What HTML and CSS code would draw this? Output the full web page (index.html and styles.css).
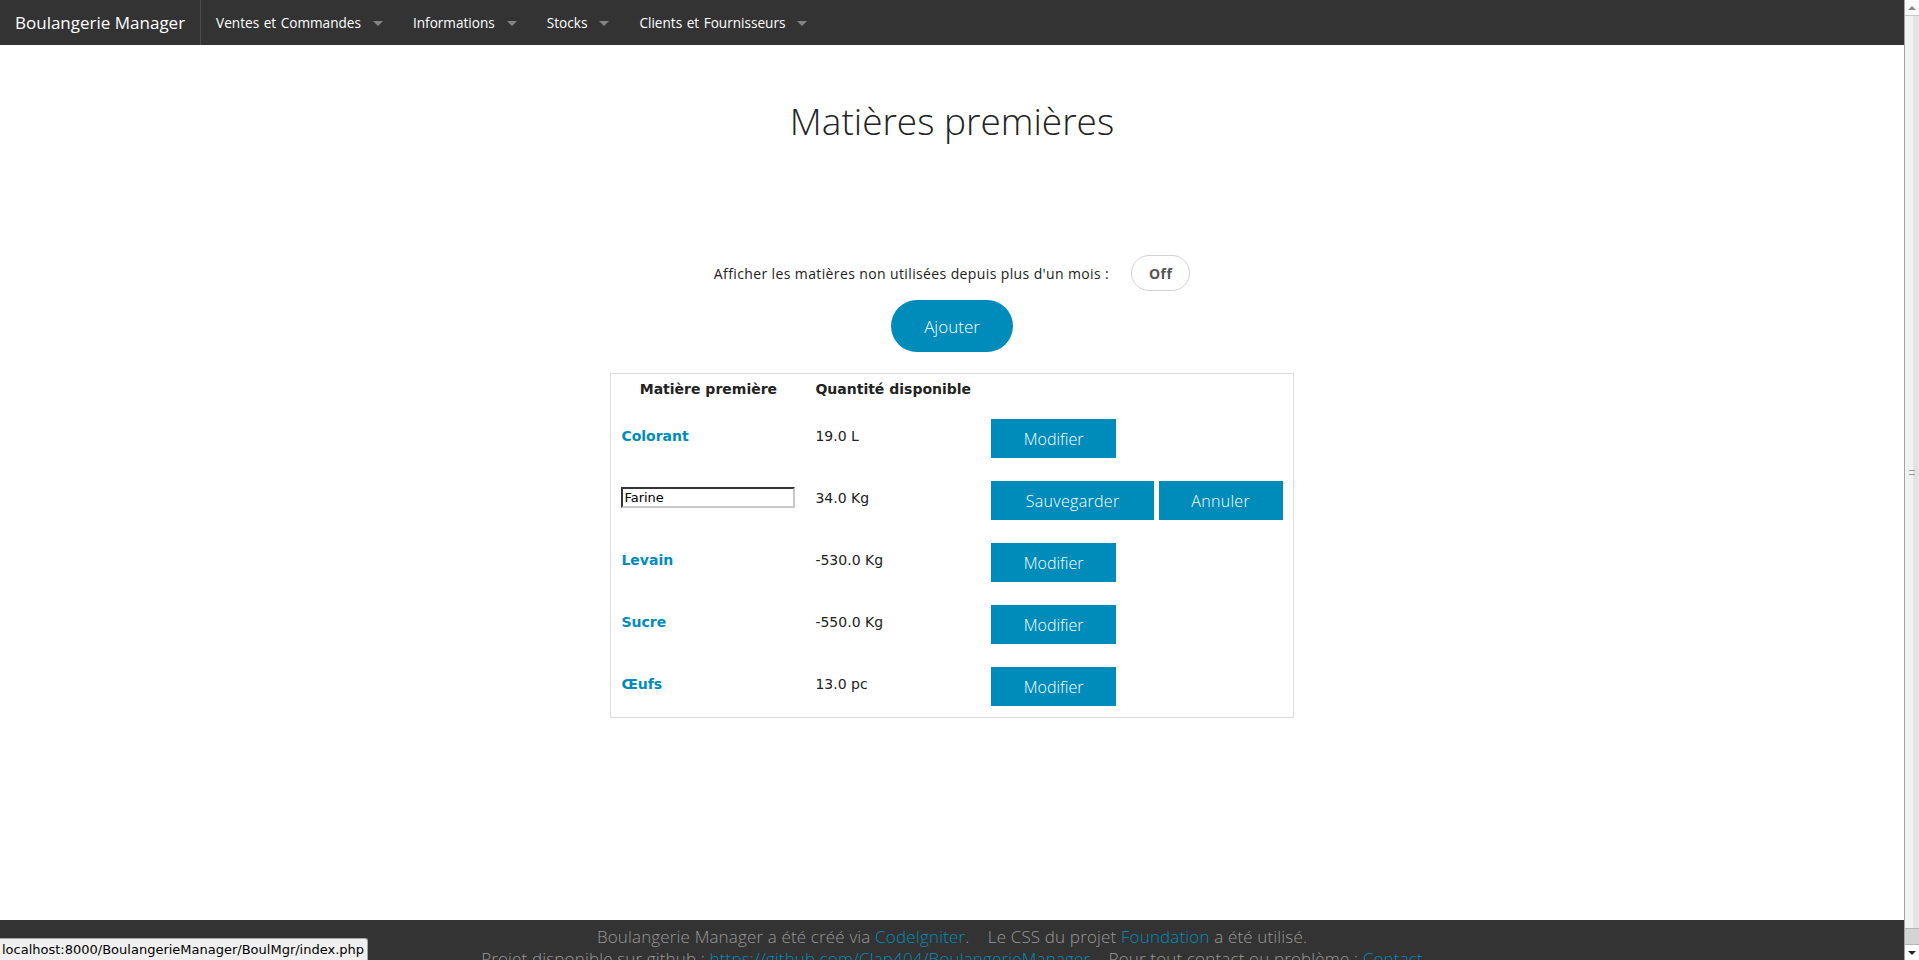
FILE: index.html
```html
<!DOCTYPE html>
<html lang="fr">
<head>
<meta charset="utf-8">
<title>Boulangerie Manager</title>
<link rel="stylesheet" href="styles.css">
</head>
<body>
<nav class="topbar">
  <a class="brand" href="#">Boulangerie Manager</a>
  <ul class="menu">
    <li class="menu-item"><a href="#">Ventes et Commandes</a><span class="caret"></span></li>
    <li class="menu-item"><a href="#">Informations</a><span class="caret"></span></li>
    <li class="menu-item"><a href="#">Stocks</a><span class="caret"></span></li>
    <li class="menu-item"><a href="#">Clients et Fournisseurs</a><span class="caret"></span></li>
  </ul>
</nav>

<main class="content">
  <h2 class="page-title">Matières premières</h2>

  <div class="filter-row">
    <span class="filter-label">Afficher les matières non utilisées depuis plus d'un mois :</span>
    <button class="toggle">Off</button>
  </div>

  <div class="add-row">
    <button class="btn btn-round">Ajouter</button>
  </div>

  <table class="stock-table">
    <thead>
      <tr>
        <th class="col-name">Matière première</th>
        <th class="col-qty">Quantité disponible</th>
        <th class="col-actions"></th>
      </tr>
    </thead>
    <tbody>
      <tr>
        <td class="cell-text"><a class="item-link" href="#">Colorant</a></td>
        <td class="cell-text">19.0 L</td>
        <td class="cell-actions"><button class="btn btn-edit">Modifier</button></td>
      </tr>
      <tr>
        <td class="cell-text"><input class="name-input" type="text" value="Farine"></td>
        <td class="cell-text">34.0 Kg</td>
        <td class="cell-actions"><button class="btn btn-save">Sauvegarder</button> <button class="btn btn-cancel">Annuler</button></td>
      </tr>
      <tr>
        <td class="cell-text"><a class="item-link" href="#">Levain</a></td>
        <td class="cell-text">-530.0 Kg</td>
        <td class="cell-actions"><button class="btn btn-edit">Modifier</button></td>
      </tr>
      <tr>
        <td class="cell-text"><a class="item-link" href="#">Sucre</a></td>
        <td class="cell-text">-550.0 Kg</td>
        <td class="cell-actions"><button class="btn btn-edit">Modifier</button></td>
      </tr>
      <tr>
        <td class="cell-text"><a class="item-link" href="#">Œufs</a></td>
        <td class="cell-text">13.0 pc</td>
        <td class="cell-actions"><button class="btn btn-edit">Modifier</button></td>
      </tr>
    </tbody>
  </table>
</main>

<footer class="footer">
  <p>Boulangerie Manager a été créé via <a href="#">CodeIgniter</a>.&nbsp;&nbsp;&nbsp; Le CSS du projet <a href="#">Foundation</a> a été utilisé.</p>
  <p>Projet disponible sur github : <a href="#">https://github.com/Clap404/BoulangerieManager</a>&nbsp;&nbsp;&nbsp; Pour tout contact ou problème : <a href="#">Contact</a></p>
</footer>

<div class="status-url">localhost:8000/BoulangerieManager/BoulMgr/index.php</div>

<div class="scrollbar" aria-hidden="true">
  <div class="sb-btn sb-up"><span class="sb-arrow-up"></span></div>
  <div class="sb-thumb"><span class="sb-grip"></span></div>
  <div class="sb-track"></div>
  <div class="sb-btn sb-down"><span class="sb-arrow-down"></span></div>
</div>
</body>
</html>
```

FILE: styles.css
```css
html, body {
  margin: 0;
  padding: 0;
}

body {
  margin-right: 15px;
  background: #fff;
  color: #222;
  font-family: "Open Sans", "DejaVu Sans", sans-serif;
}

a {
  text-decoration: none;
}

/* ---------- top bar ---------- */
.topbar {
  display: flex;
  align-items: stretch;
  height: 45px;
  background: #333;
}

.brand {
  display: flex;
  align-items: center;
  padding: 0 15px;
  font-size: 17px;
  color: #fff;
  border-right: 1px solid #4a4a4a;
}

.menu {
  display: flex;
  margin: 0;
  padding: 0;
  list-style: none;
}

.menu-item {
  display: flex;
  align-items: center;
  padding: 0 15px;
}

.menu-item a {
  color: #fff;
  font-size: 13.6px;
  word-spacing: 1px;
}

.caret {
  width: 0;
  height: 0;
  margin-left: 12px;
  margin-top: 2px;
  border-left: 5px solid transparent;
  border-right: 5px solid transparent;
  border-top: 5px solid rgba(255, 255, 255, 0.4);
}

/* ---------- content ---------- */
.content {
  display: flex;
  flex-direction: column;
  align-items: center;
}

.page-title {
  margin: 50px 0 0;
  font-size: 37px;
  font-weight: 300;
  line-height: 52px;
  color: #222;
}

.filter-row {
  display: flex;
  align-items: center;
  gap: 22px;
  margin-top: 108px;
}

.filter-label {
  font-size: 14px;
  color: #222;
  letter-spacing: 0.38px;
}

.toggle {
  width: 59px;
  height: 36px;
  padding: 0;
  border: 1px solid #d2d2d2;
  border-radius: 18px;
  background: #fff;
  font-family: "Open Sans", sans-serif;
  font-weight: 700;
  font-size: 14px;
  letter-spacing: 0.5px;
  color: #555;
}

.add-row {
  margin-top: 9px;
}

.btn {
  height: 39px;
  padding: 0;
  border: 0;
  background: #008cba;
  color: #fff;
  font-family: "Open Sans", sans-serif;
  font-weight: 300;
  font-size: 16px;
  vertical-align: middle;
}

.btn-edit {
  width: 125px;
}

.btn-save {
  width: 163px;
  letter-spacing: 0.3px;
}

.btn-cancel {
  width: 124px;
  letter-spacing: 0.3px;
}

.btn-round {
  height: 52px;
  padding: 0 33px;
  border-radius: 26px;
  font-size: 17px;
}

/* ---------- table ---------- */
.stock-table {
  margin-top: 21px;
  width: 679px;
  border: 1px solid #ddd;
  border-collapse: collapse;
  font-family: "DejaVu Sans", sans-serif;
  font-size: 14px;
  color: #222;
}

.stock-table th {
  padding: 7px 10px 10px;
  line-height: 16px;
  font-weight: 700;
  text-align: center;
  vertical-align: middle;
  white-space: nowrap;
}

.col-name {
  width: 176px;
}

.col-qty {
  width: 151px;
}

.stock-table td {
  vertical-align: middle;
  text-align: left;
  white-space: nowrap;
}

.cell-text {
  padding: 9px 10px 14px;
}

.cell-actions {
  height: 39px;
  padding: 12px 10px 11px;
}

.item-link {
  color: #008cba;
  font-weight: 700;
}

.name-input {
  box-sizing: border-box;
  width: 174px;
  height: 21px;
  padding: 0 1px;
  border: 2px inset #c9c9c9;
  border-top-color: #8a8a8a;
  border-left-color: #8a8a8a;
  font-family: "DejaVu Sans", sans-serif;
  font-size: 13px;
  color: #000;
}

/* ---------- footer ---------- */
.footer {
  margin-top: 202px;
  padding: 6px 0 20px;
  background: #333;
  text-align: center;
  font-weight: 300;
  font-size: 17px;
  letter-spacing: 0.15px;
  line-height: 22px;
  color: #999;
}

.footer p {
  margin: 0;
}

.footer a {
  color: #008cba;
}

/* ---------- browser status overlay ---------- */
.status-url {
  position: fixed;
  left: 0;
  bottom: 0;
  padding: 2px 3px 2px 2px;
  background: #f0f0f0;
  border: 1px solid #a8a8a8;
  border-left: 0;
  border-bottom: 0;
  border-top-right-radius: 3px;
  font-family: "DejaVu Sans", sans-serif;
  font-size: 13px;
  line-height: 17px;
  color: #000;
}

/* ---------- browser scrollbar overlay ---------- */
.scrollbar {
  position: fixed;
  top: 0;
  right: 0;
  bottom: 0;
  width: 14px;
  display: flex;
  flex-direction: column;
  border-left: 1px solid #a3a3a3;
  background: #f2f2f2;
}

.sb-btn {
  height: 15px;
  display: flex;
  align-items: center;
  justify-content: center;
  background: #fafafa;
}

.sb-up {
  border-bottom: 1px solid #c8c8c8;
}

.sb-arrow-up {
  width: 0;
  height: 0;
  border-left: 4px solid transparent;
  border-right: 4px solid transparent;
  border-bottom: 4px solid #888;
}

.sb-arrow-down {
  width: 0;
  height: 0;
  border-left: 4px solid transparent;
  border-right: 4px solid transparent;
  border-top: 4px solid #222;
}

.sb-thumb {
  flex: 1;
  display: flex;
  align-items: center;
  justify-content: center;
  background: linear-gradient(to right, #f2f2f2 55%, #e4e4e4 55%);
}

.sb-grip {
  width: 6px;
  height: 3px;
  border-top: 1px solid #9a9a9a;
  border-bottom: 1px solid #9a9a9a;
}

.sb-track {
  height: 15px;
  background: #d4d4d4;
  border-top: 1px solid #b5b5b5;
}

.sb-down {
  border-top: 1px solid #b5b5b5;
  background: #fff;
}
```
